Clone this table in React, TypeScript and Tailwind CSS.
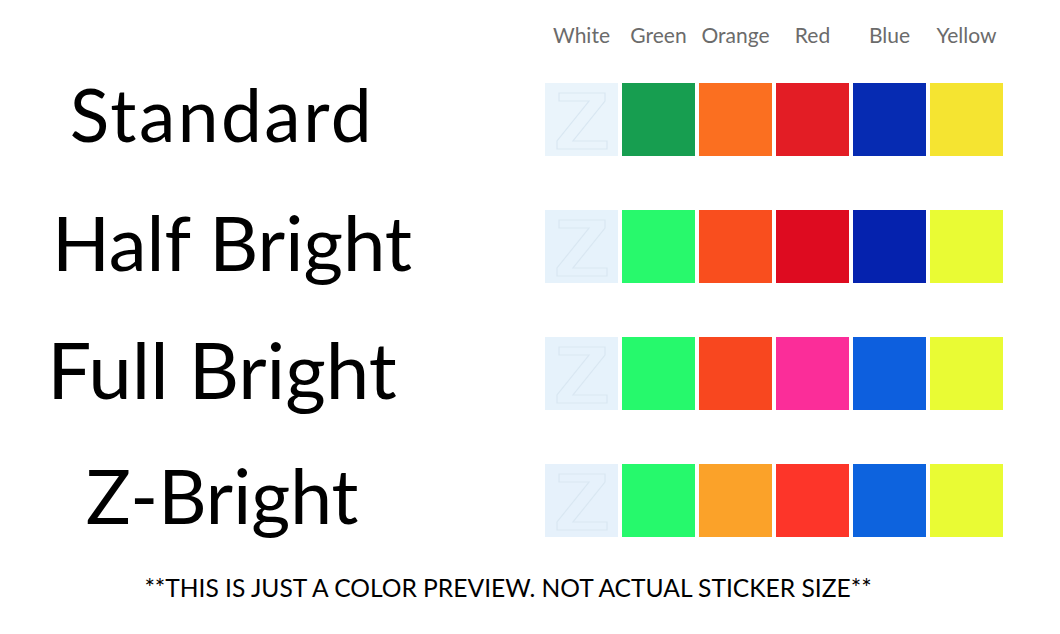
import React from "react";

const rows: { label: string; cls: string; colors: string[] }[] = [
  { label: "Standard", cls: "text-[73px] tracking-[2.5px] pl-[0px]", colors: ["#eaf4fb", "#179e50", "#fb6f20", "#e31d25", "#062bb2", "#f5e431"] },
  { label: "Half Bright", cls: "text-[76px] pl-[20px]", colors: ["#e6f2fb", "#28f96c", "#f94e1e", "#de0b20", "#0522ae", "#e9fb34"] },
  { label: "Full Bright", cls: "text-[78px] pl-0", colors: ["#e6f2fb", "#26f96c", "#f8471f", "#fb2d99", "#0d5fde", "#e9fb34"] },
  { label: "Z-Bright", cls: "text-[75px] pl-0", colors: ["#e6f1fb", "#26f96c", "#fba229", "#fd3529", "#0d63de", "#e9fb34"] },
];

const headers = ["White", "Green", "Orange", "Red", "Blue", "Yellow"];

function ZMark() {
  return (
    <svg width="73" height="73" viewBox="0 0 73 73" className="block">
      <path
        d="M14 10 L60 10 L60 18 L28 58 L62 58 L62 66 L12 66 L12 58 L44 18 L14 18 Z"
        fill="none"
        stroke="#d9e7f2"
        strokeWidth="1.2"
      />
    </svg>
  );
}

export default function App() {
  return (
    <div
      className="w-[1060px] h-[634px] bg-white flex flex-col overflow-hidden"
      style={{ fontFamily: "Lato, 'Open Sans', sans-serif" }}
    >
      <div className="flex gap-[4px] pl-[545px] pt-[22px] h-[60px]">
        {headers.map((h) => (
          <div key={h} className="w-[73px] text-center text-[21px] leading-[26px] text-[#6b6b6b]">
            {h}
          </div>
        ))}
      </div>
      <div className="flex flex-col gap-[54px] mt-[23px]">
        {rows.map((r) => (
          <div key={r.label} className="flex items-center h-[73px]">
            <div className={`w-[444px] text-center text-black leading-none pb-[10px] ${r.cls}`}>
              {r.label}
            </div>
            <div className="flex gap-[4px] ml-[101px]">
              {r.colors.map((c, i) => (
                <div key={i} className="w-[73px] h-[73px]" style={{ backgroundColor: c }}>
                  {i === 0 ? <ZMark /> : null}
                </div>
              ))}
            </div>
          </div>
        ))}
      </div>
      <div className="mt-[36px] pr-[44px] text-center text-[24.6px] leading-[30px] text-black">
        **THIS IS JUST A COLOR PREVIEW. NOT ACTUAL STICKER SIZE**
      </div>
    </div>
  );
}
